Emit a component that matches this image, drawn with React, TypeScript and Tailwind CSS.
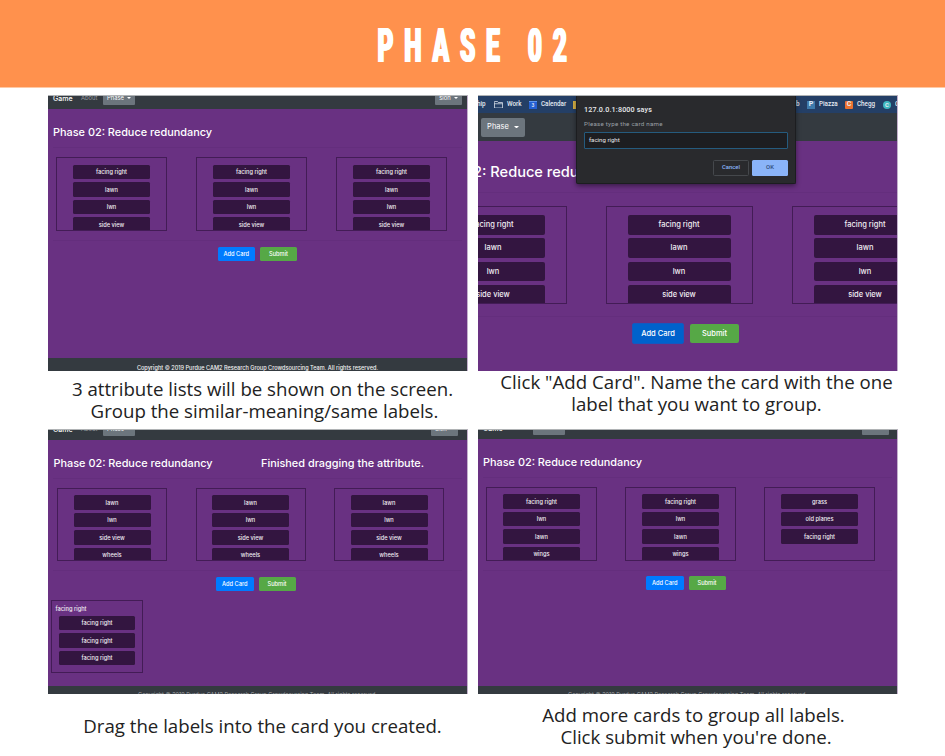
import React from "react";

const inter = "font-['Inter','Liberation_Sans',sans-serif]";

function Caret({ className = "h-[2px] w-[4px]" }: { className?: string }) {
  return (
    <svg viewBox="0 0 8 4" className={className}>
      <path d="M0 0h8L4 4z" fill="currentColor" />
    </svg>
  );
}

function NavBar({ className, userClass }: { className: string; userClass: string }) {
  return (
    <div className={`flex h-[22px] shrink-0 items-center bg-[#343a40] text-[5.8px] leading-none text-white ${className}`}>
      <span className="ml-[5px] w-[28px] text-[7px] font-medium">Game</span>
      <span className="w-[22px] text-[#9a9da0]">About</span>
      <span className="flex h-[14px] w-[32px] items-center justify-center gap-[3px] rounded-[1px] bg-[#6c757d]">
        Phase
        <Caret />
      </span>
      <span className={`ml-auto flex h-[14px] w-[27px] items-center justify-center gap-[3px] rounded-[1px] bg-[#6c757d] ${userClass}`}>
        sion
        <Caret />
      </span>
    </div>
  );
}

function Label({ text, large }: { text: string; large?: boolean }) {
  return (
    <div
      className={
        large
          ? "mb-[3.5px] flex h-[19.8px] shrink-0 items-center justify-center rounded-[2px] bg-[#331540] text-[7.5px] font-medium leading-none text-[#f1edf3]"
          : "mb-[2.8px] flex h-[14.8px] shrink-0 items-center justify-center rounded-[1.5px] bg-[#331540] text-[5.7px] font-medium leading-none text-[#f1edf3]"
      }
    >
      {text}
    </div>
  );
}

function List({ items, className, large }: { items: string[]; className: string; large?: boolean }) {
  return (
    <div className={`flex shrink-0 flex-col overflow-hidden border border-[#431c56] ${className}`}>
      {items.map((t, i) => (
        <Label key={i} text={t} large={large} />
      ))}
    </div>
  );
}

function Buttons({ className }: { className: string }) {
  return (
    <div className={`flex shrink-0 gap-[5px] text-[5.7px] font-medium leading-none text-white ${className}`}>
      <span className="flex h-[14px] w-[37.5px] items-center justify-center rounded-[1.5px] bg-[#007bff]">Add Card</span>
      <span className="flex h-[14px] w-[37px] items-center justify-center rounded-[1.5px] bg-[#56a846]">Submit</span>
    </div>
  );
}

function Rule({ className }: { className: string }) {
  return <div className={`h-px shrink-0 bg-[#642e7d] ${className}`} />;
}

const frame =
  "flex w-[420px] shrink-0 flex-col overflow-hidden border-r border-t border-r-[#c3b0cc] border-t-[#b0b3b5] bg-[#693182] " + inter;

const heading = "flex h-[16px] shrink-0 items-center whitespace-nowrap text-[10.9px] font-medium leading-none text-white";

function PanelLists() {
  const items = ["facing right", "lawn", "lwn", "side view"];
  const list = "h-[74px] w-[111px] px-[16px] pt-[6.5px]";
  return (
    <section className={`${frame} h-[276px]`}>
      <NavBar className="-mt-[9px]" userClass="mr-[5px]" />
      <div className={`${heading} ml-[5px] mt-[15px]`}>Phase 02: Reduce redundancy</div>
      <Rule className="mx-[5px] mt-[7px]" />
      <div className="ml-[8px] mt-[9px] flex gap-[29px]">
        <List items={items} className={list} />
        <List items={items} className={list} />
        <List items={items} className={list} />
      </div>
      <Rule className="mx-[5px] mt-[9px]" />
      <Buttons className="ml-[169.5px] mt-[6px]" />
      <footer className="mt-auto flex h-[13px] shrink-0 justify-center overflow-hidden whitespace-nowrap bg-[#343a40] pt-[8px] text-[5.57px] font-medium leading-none text-[#f3f3f3]">
        Copyright © 2019 Purdue CAM2 Research Group Crowdsourcing Team. All rights reserved.
      </footer>
    </section>
  );
}

function FolderIcon() {
  return (
    <svg viewBox="0 0 18 15" className="h-[7.5px] w-[9px] shrink-0" fill="none" stroke="#dfe6ee" strokeWidth="1.5">
      <path d="M1 3V1h6l1.500 2H17v11H1zM1 5.500h16" />
    </svg>
  );
}

function Dialog() {
  return (
    <div className="absolute left-[98px] top-0 flex h-[88px] w-[220px] flex-col rounded-b-[2px] border border-t-0 border-[#1c1d20] bg-[#292a2d] pl-[7px] pr-[7px] font-['Roboto','Liberation_Sans',sans-serif] leading-none shadow-[0_2px_5px_rgba(0,0,0,0.45)]">
      <div className="mt-[10px] text-[7.2px] font-medium tracking-[0.15px] text-[#e8eaed]">127.0.0.1:8000 says</div>
      <div className="mt-[7.500px] text-[6.2px] tracking-[0.24px] text-[#9aa0a6]">Please type the card name</div>
      <div className="mt-[5px] flex h-[17px] items-center rounded-[1px] border border-[#255b7e] bg-[#1d1e21] px-[4px] text-[6.1px] text-[#e8eaed]">facing right</div>
      <div className="mt-[11px] flex justify-end gap-[3px] text-[5.9px] font-medium">
        <span className="flex h-[16px] w-[36px] items-center justify-center rounded-[1.5px] border border-[#45484c] text-[#8ab4f8]">Cancel</span>
        <span className="flex h-[16px] w-[36px] items-center justify-center rounded-[1.5px] bg-[#8ab4f8] text-[#2e4a78]">OK</span>
      </div>
    </div>
  );
}

function PanelAddCard() {
  const items = ["facing right", "lawn", "lwn", "side view"];
  const list = "h-[98px] w-[147px] px-[21px] pt-[8px]";
  return (
    <section className={`${frame} relative h-[276px]`}>
      <div className="flex h-[17px] shrink-0 items-center overflow-hidden whitespace-nowrap bg-[#243f66] font-['Roboto','Liberation_Sans',sans-serif] text-[6.3px] font-medium leading-none text-[#e6ebf2]">
        <span className="-ml-px w-[17px] shrink-0">hip</span>
        <FolderIcon />
        <span className="ml-[4px] w-[22px] shrink-0">Work</span>
        <span className="flex h-[8px] w-[8px] shrink-0 items-center justify-center border-t border-[#5e97f0] bg-[#2460d2] text-[5px] leading-none">3</span>
        <span className="ml-[4px] w-[32px] shrink-0">Calendar</span>
        <span className="h-[8px] w-[8px] shrink-0 bg-[#d6b044]" />
        <span className="ml-auto w-[11px] shrink-0">b</span>
        <span className="flex h-[8px] w-[8px] shrink-0 items-center justify-center bg-[#3e7aab] text-[7px] font-bold">P</span>
        <span className="ml-[4px] w-[26px] shrink-0">Piazza</span>
        <span className="flex h-[8px] w-[8px] shrink-0 items-center justify-center rounded-[1px] bg-[#eb7130] text-[7px] font-bold">C</span>
        <span className="ml-[4px] w-[26px] shrink-0">Chegg</span>
        <span className="flex h-[8px] w-[8px] shrink-0 items-center justify-center rounded-full bg-[#3fb8c0] text-[6px] font-bold">C</span>
        <span className="ml-[4px] w-[2px] shrink-0 overflow-hidden">C</span>
      </div>
      <div className="flex h-[28px] shrink-0 items-center bg-[#343a40]">
        <span className="ml-[3px] flex h-[19px] w-[44px] items-center justify-center gap-[5px] rounded-[2px] bg-[#6c757d] text-[7.5px] leading-none text-white">
          Phase
          <Caret className="h-[2.5px] w-[5px]" />
        </span>
      </div>
      <div className="-ml-[5px] mt-[21px] flex h-[20px] shrink-0 items-center whitespace-nowrap text-[14.6px] font-medium leading-none text-white">2: Reduce redundancy</div>
      <Rule className="mt-[10px]" />
      <div className="-ml-[58.500px] mt-[13px] flex gap-[39px]">
        <List large items={items} className={list} />
        <List large items={items} className={list} />
        <List large items={items} className={list} />
      </div>
      <Rule className="mt-[12px]" />
      <div className="ml-[154px] mt-[6px] flex items-center gap-[6px] text-[7.5px] font-medium leading-none text-white">
        <span className="flex h-[21px] w-[52px] items-center justify-center rounded-[2px] border border-[#1558c0] bg-[#0062cc]">Add Card</span>
        <span className="flex h-[19px] w-[49px] items-center justify-center rounded-[2px] bg-[#56a846]">Submit</span>
      </div>
      <Dialog />
    </section>
  );
}

function PanelDrag() {
  const items = ["lawn", "lwn", "side view", "wheels"];
  const list = "h-[73px] w-[110px] px-[15.500px] pt-[6px]";
  return (
    <section className={`${frame} h-[265px]`}>
      <NavBar className="-mt-[12px]" userClass="mr-[9px]" />
      <div className={`${heading} ml-[5.500px] mt-[15px]`}>
        <span className="w-[207.500px]">Phase 02: Reduce redundancy</span>
        <span>Finished dragging the attribute.</span>
      </div>
      <Rule className="mx-[5px] mt-[7px]" />
      <div className="ml-[9px] mt-[9px] flex gap-[28.500px]">
        <List items={items} className={list} />
        <List items={items} className={list} />
        <List items={items} className={list} />
      </div>
      <Rule className="mx-[5px] mt-[9px]" />
      <Buttons className="ml-[168px] mt-[5.500px]" />
      <div className="ml-[3px] mt-[9px] flex h-[73px] w-[92px] shrink-0 flex-col border border-[#431c56] px-[7px] pt-[5px]">
        <div className="-ml-[3.500px] mb-[4px] text-[5.7px] font-medium leading-[6px] text-[#f1edf3]">facing right</div>
        <Label text="facing right" />
        <Label text="facing right" />
        <Label text="facing right" />
      </div>
      <footer className="mt-auto h-[8px] shrink-0 overflow-hidden bg-[#343a40] pt-[7px] text-center text-[5.57px] leading-none text-[#a0a3a6]">
        Copyright © 2019 Purdue CAM2 Research Group Crowdsourcing Team. All rights reserved.
      </footer>
    </section>
  );
}

function PanelSubmit() {
  const items = ["facing right", "lwn", "lawn", "wings"];
  const list = "h-[74px] w-[111px] px-[16px] pt-[6px]";
  return (
    <section className={`${frame} h-[265px]`}>
      <NavBar className="-mt-[13px]" userClass="mr-[8px]" />
      <div className={`${heading} ml-[5px] mt-[15px]`}>Phase 02: Reduce redundancy</div>
      <Rule className="mx-[5px] mt-[7px]" />
      <div className="ml-[8px] mt-[9px] flex gap-[28px]">
        <List items={items} className={list} />
        <List items={items} className={list} />
        <List items={["grass", "old planes", "facing right"]} className={list} />
      </div>
      <Rule className="mx-[5px] mt-[9px]" />
      <Buttons className="ml-[168px] mt-[5px]" />
      <footer className="mt-auto h-[8px] shrink-0 overflow-hidden bg-[#343a40] pt-[7px] text-center text-[5.57px] leading-none text-[#a0a3a6]">
        Copyright © 2019 Purdue CAM2 Research Group Crowdsourcing Team. All rights reserved.
      </footer>
    </section>
  );
}

function Caption({ lines, className, lastClass = "" }: { lines: string[]; className: string; lastClass?: string }) {
  return (
    <p className={`text-center font-['Open_Sans','Noto_Sans',sans-serif] text-[18.67px] leading-[22px] text-[#222222] ${className}`}>
      {lines.map((line, i) => (
        <span key={line} className={`block whitespace-nowrap ${i > 0 ? lastClass : ""}`}>
          {line}
        </span>
      ))}
    </p>
  );
}

export default function App() {
  return (
    <main className="h-[756px] w-[945px] overflow-hidden bg-white">
      <header className="flex h-[88px] items-center justify-center border-b border-[#ffc9a5] bg-[#ff914d]">
        <h1 className="origin-center scale-x-[0.5] whitespace-pre pt-[3px] pl-[22px] font-['Roboto','Liberation_Sans',sans-serif] text-[49px] font-black leading-none tracking-[21.5px] text-white [text-shadow:1.5px_0_#fff,-1.5px_0_#fff] [word-spacing:1px]">PHASE 02</h1>
      </header>
      <div className="ml-[48px] mt-[7px] grid w-[850px] grid-cols-[420px_420px] grid-rows-[334px_327px] gap-x-[10px]">
        <div>
          <PanelLists />
          <Caption className="mt-[7px] pl-[9px]" lastClass="pl-[4px]" lines={["3 attribute lists will be shown on the screen.", "Group the similar-meaning/same labels."]} />
        </div>
        <div>
          <PanelAddCard />
          <Caption className="pl-[17px]" lines={['Click "Add Card". Name the card with the one', "label that you want to group."]} />
        </div>
        <div>
          <PanelDrag />
          <Caption className="mt-[21px] pl-[9px]" lines={["Drag the labels into the card you created."]} />
        </div>
        <div>
          <PanelSubmit />
          <Caption className="mt-[10px] pl-[11px]" lastClass="pl-[5px]" lines={["Add more cards to group all labels.", "Click submit when you're done."]} />
        </div>
      </div>
    </main>
  );
}
